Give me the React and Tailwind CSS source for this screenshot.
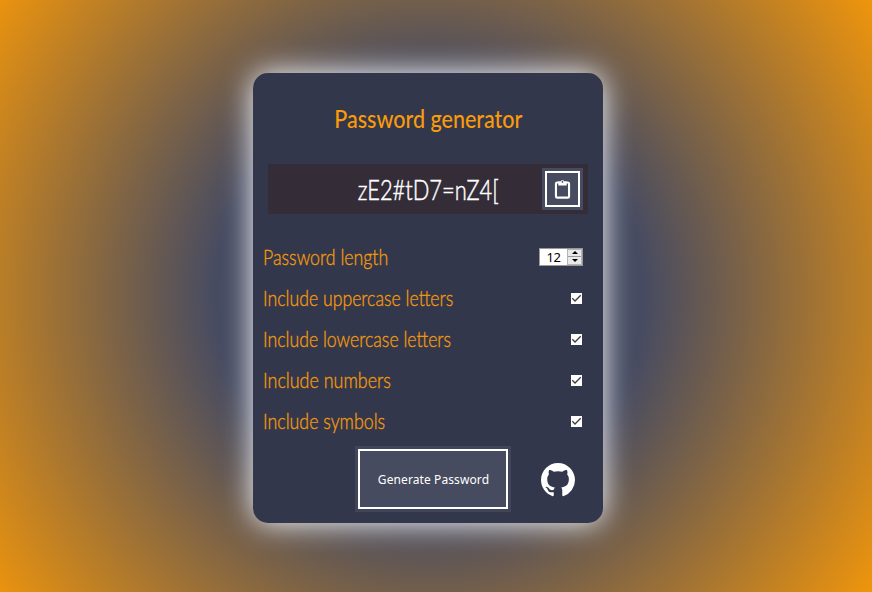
import React from "react";

const options = [
  { label: "Include uppercase letters", scale: "scale-x-[0.842]" },
  { label: "Include lowercase letters", scale: "scale-x-[0.842]" },
  { label: "Include numbers", scale: "scale-x-[0.853]" },
  { label: "Include symbols", scale: "scale-x-[0.847]" },
];

function Label({ children, scale }) {
  return (
    <span className={"mb-[3px] inline-block origin-left whitespace-nowrap font-['Lato',sans-serif] text-[21px] font-light leading-[24px] text-[#f2990d] [-webkit-text-stroke:0.35px_#f2990d] " + scale}>
      {children}
    </span>
  );
}

function Check() {
  return (
    <span className="mr-[21px] mb-[2px] block h-[11px] w-[11px] bg-white">
      <svg viewBox="0 0 11 11" className="block h-[11px] w-[11px]" fill="none" stroke="#3c3c3c" strokeWidth="1.3">
        <path d="M1.3 5.3 4 8 9.7 2.3" />
      </svg>
    </span>
  );
}

export default function App() {
  return (
    <div className="flex h-[592px] w-[872px] items-start overflow-hidden bg-[radial-gradient(circle_at_430px_296px,#464b62_40%,#ef950c_100%)] pt-[73px] pl-[253px]">
      <main className="flex h-[450px] w-[350px] flex-col rounded-[15px] bg-[#33374b] shadow-[0_0_30px_#fff]">
        <h1 className="mt-[30px] flex h-[30px] justify-center">
          <span className="inline-block scale-x-[0.86] whitespace-nowrap font-['Lato',sans-serif] text-[25px] font-medium leading-[30px] text-[#fb9b0a]">
            Password generator
          </span>
        </h1>
        <div className="mx-[15px] mt-[31px] grid h-[50px] grid-cols-[46px_1fr_46px] items-center bg-[#342d38]">
          <span className="col-start-2 flex justify-center">
            <span className="inline-block scale-x-[0.78] whitespace-nowrap font-['Lato',sans-serif] text-[28px] font-light leading-[34px] text-white [-webkit-text-stroke:0.5px_#fff]">
              zE2#tD7=nZ4[
            </span>
          </span>
          <button className="mb-px flex h-[42px] w-[41px] items-center justify-center border-[3px] border-[#464b60] bg-white p-[2px]">
            <span className="flex h-full w-full items-center justify-center bg-[#464b60]">
              <svg viewBox="0 0 18 20" className="h-[22px] w-[19px] shrink-0" fill="none">
                <rect x="2.8" y="3.8" width="12.4" height="14.4" rx="1.2" stroke="#fff" strokeWidth="2" />
                <path d="M5 3h2.2a1.9 1.9 0 0 1 3.6 0H13v3.7H5z" fill="#fff" />
                <circle cx="9" cy="3.3" r=".8" fill="#464b60" />
              </svg>
            </span>
          </button>
        </div>
        <div className="mt-[24px] flex flex-col pl-[10px]">
          <div className="flex h-[41px] items-center justify-between">
            <Label scale="scale-x-[0.845]">Password length</Label>
            <div className="mr-[20px] mb-[4px] flex h-[18px] w-[44px] border border-[#999] bg-white">
              <span className="flex flex-1 items-center justify-center pt-px font-['Noto_Sans',sans-serif] text-[13px] leading-none tracking-[-0.5px] text-black">12</span>
              <span className="flex w-[15px] flex-col gap-px border border-[#b5b5b5] bg-[#999]">
                <span className="flex flex-1 items-center justify-center bg-[#e9e9e9]">
                  <svg viewBox="0 0 6 3" className="h-[3px] w-[6px]"><path d="M0 3 3 0 6 3z" /></svg>
                </span>
                <span className="flex flex-1 items-center justify-center bg-[#e9e9e9]">
                  <svg viewBox="0 0 6 3" className="h-[3px] w-[6px]"><path d="M0 0 3 3 6 0z" /></svg>
                </span>
              </span>
            </div>
          </div>
          {options.map((o) => (
            <div key={o.label} className="flex h-[41px] items-center justify-between">
              <Label scale={o.scale}>{o.label}</Label>
              <Check />
            </div>
          ))}
        </div>
        <div className="mt-[3px] flex items-center pl-[102px]">
          <button className="h-[66px] w-[156px] border-[3px] border-[#40455a] bg-white p-[2px]">
            <span className="flex h-full w-full items-center justify-center whitespace-nowrap bg-[#464b60] pt-[2px] pl-px font-['Noto_Sans',sans-serif] text-[12px] tracking-[0.1px] text-white">
              Generate Password
            </span>
          </button>
          <svg viewBox="0 0 16 16" className="mt-[2px] ml-[30px] h-[34px] w-[34px]" fill="#fff">
            <path d="M8 0C3.58 0 0 3.58 0 8c0 3.54 2.29 6.53 5.47 7.59.4.07.55-.17.55-.38 0-.19-.01-.82-.01-1.49-2.01.37-2.53-.49-2.69-.94-.09-.23-.48-.94-.82-1.13-.28-.15-.68-.52-.01-.53.63-.01 1.08.58 1.23.82.72 1.21 1.87.87 2.33.66.07-.52.28-.87.51-1.07-1.78-.2-3.64-.89-3.64-3.95 0-.87.31-1.59.82-2.15-.08-.2-.36-1.02.08-2.12 0 0 .67-.21 2.2.82.64-.18 1.32-.27 2-.27s1.36.09 2 .27c1.53-1.04 2.2-.82 2.2-.82.44 1.1.16 1.92.08 2.12.51.56.82 1.27.82 2.15 0 3.07-1.87 3.75-3.65 3.95.29.25.54.73.54 1.48 0 1.07-.01 1.93-.01 2.2 0 .21.15.46.55.38A8.01 8.01 0 0 0 16 8c0-4.42-3.58-8-8-8z" />
          </svg>
        </div>
      </main>
    </div>
  );
}
